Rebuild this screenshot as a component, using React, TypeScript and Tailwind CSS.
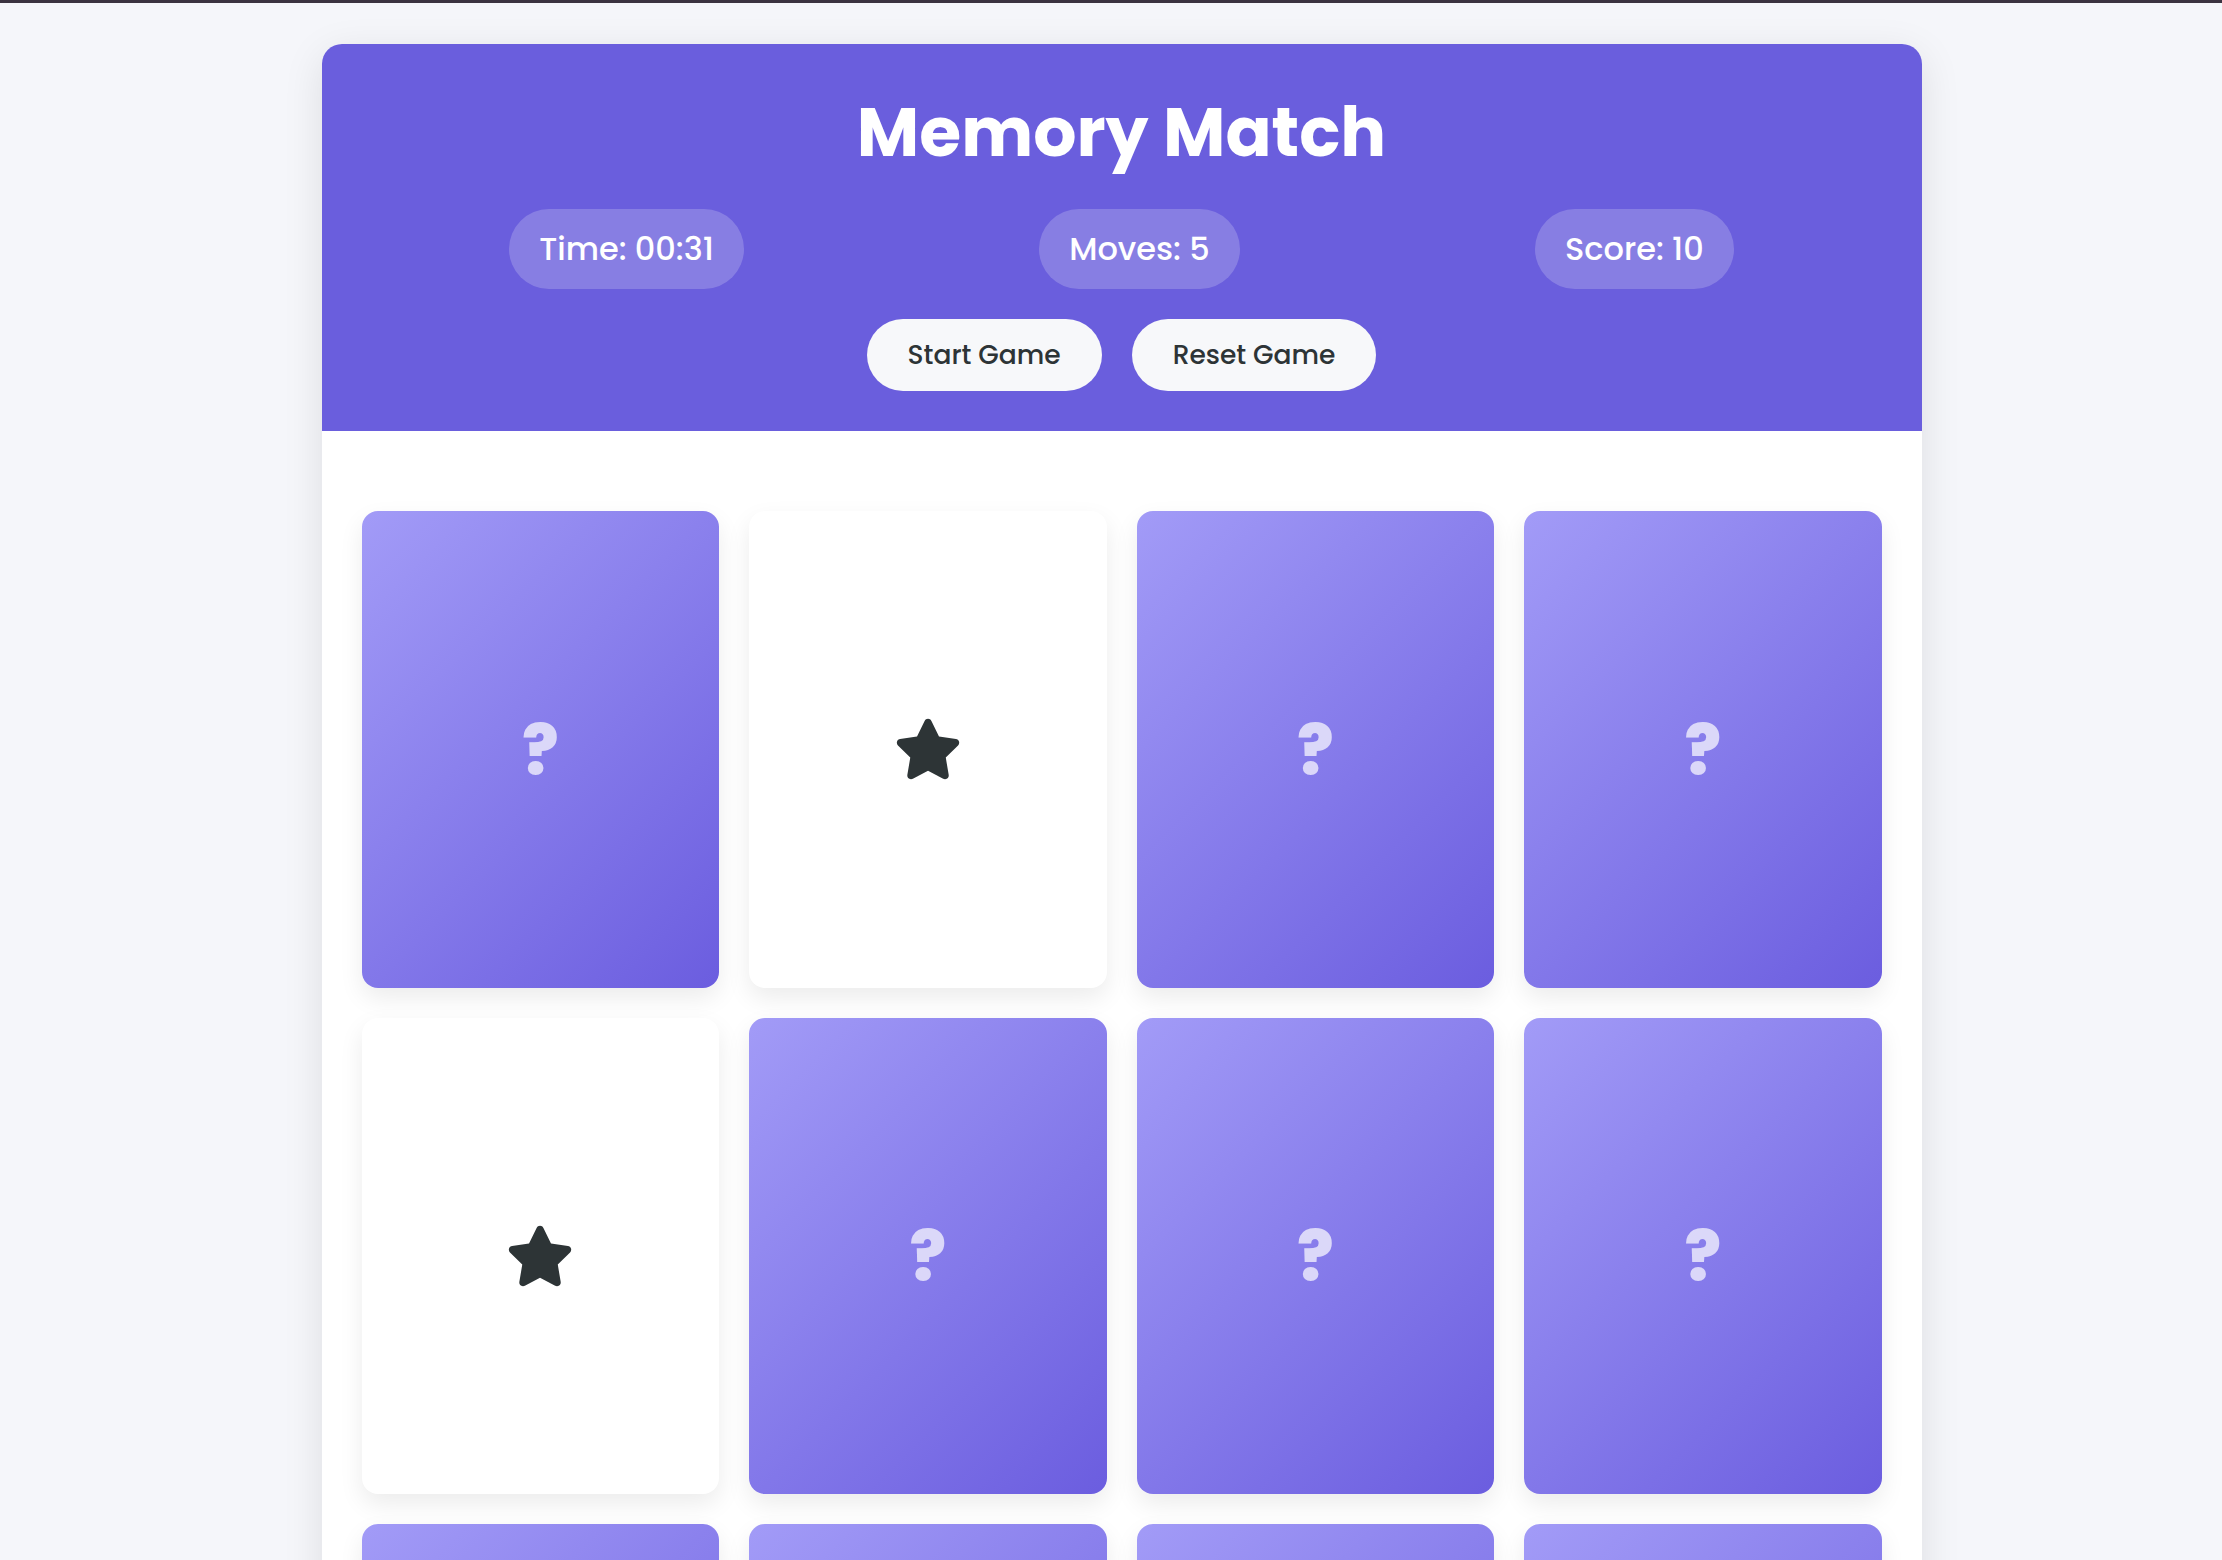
import { FaStar } from "react-icons/fa6";

const flipped = [false, true, false, false, true, false, false, false, false, false, false, false, false, false, false, false];

function Card({ up }: { up: boolean }) {
  if (up) {
    return (
      <div className="aspect-[3/4] rounded-[16px] bg-white shadow-[0_10px_25px_rgba(0,0,0,0.08)] flex items-center justify-center">
        <FaStar size={68} color="#2d3436" />
      </div>
    );
  }
  return (
    <div className="aspect-[3/4] rounded-[16px] bg-[linear-gradient(135deg,#a29bf7,#6b5ddf)] shadow-[0_10px_25px_rgba(0,0,0,0.08)] flex items-center justify-center">
      <span className="text-[68px] font-extrabold leading-none text-white/70 mt-[5px]">?</span>
    </div>
  );
}

export default function App() {
  return (
    <div className="min-h-screen bg-[#f5f6fa]" style={{ fontFamily: "Poppins, Inter, 'Noto Sans', sans-serif" }}>
      <div className="h-[3px] bg-[#3b3340]" />
      <div className="pl-[21px] pt-[41px]">
        <div className="mx-auto w-[1600px] rounded-[20px] bg-white shadow-[0_10px_40px_rgba(0,0,0,0.1)] overflow-hidden">
          <header className="bg-[#6a5edd] px-10 pt-10 pb-10 text-center">
            <h1 className="text-[68px] font-bold leading-[84px] text-white mt-[7px] mb-[34px]">Memory Match</h1>
            <div className="flex justify-around">
              <div className="h-[80px] px-[30px] rounded-full bg-white/20 flex items-center text-[32px] font-medium text-white">Time: 00:31</div>
              <div className="h-[80px] px-[30px] rounded-full bg-white/20 flex items-center text-[32px] font-medium text-white">Moves: 5</div>
              <div className="h-[80px] px-[30px] rounded-full bg-white/20 flex items-center text-[32px] font-medium text-white">Score: 10</div>
            </div>
            <div className="flex justify-center gap-[30px] mt-[30px]">
              <button className="h-[72px] px-[41px] rounded-full bg-[#f7f8fa] text-[26.5px] font-medium text-[#2d3436]">Start Game</button>
              <button className="h-[72px] px-[41px] rounded-full bg-[#f7f8fa] text-[26.5px] font-medium text-[#2d3436]">Reset Game</button>
            </div>
          </header>
          <div className="grid grid-cols-4 gap-[30px] px-10 pt-20 pb-10">
            {flipped.map((f, i) => (
              <Card key={i} up={f} />
            ))}
          </div>
        </div>
      </div>
    </div>
  );
}
